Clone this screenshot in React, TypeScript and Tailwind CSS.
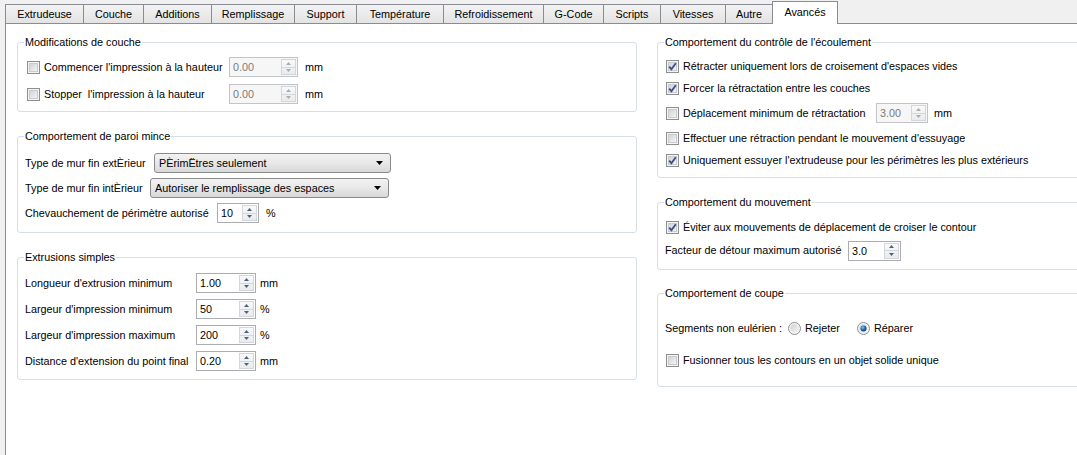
import React from 'react';

const tabs = [
    { label: 'Extrudeuse', w: 'w-[79px]' },
    { label: 'Couche', w: 'w-[61px]' },
    { label: 'Additions', w: 'w-[69px]' },
    { label: 'Remplissage', w: 'w-[84px]' },
    { label: 'Support', w: 'w-[63px]' },
    { label: 'Température', w: 'w-[88px]' },
    { label: 'Refroidissement', w: 'w-[101px]' },
    { label: 'G-Code', w: 'w-[61px]' },
    { label: 'Scripts', w: 'w-[58px]' },
    { label: 'Vitesses', w: 'w-[66px]' },
    { label: 'Autre', w: 'w-[48px]' },
];

function CheckBox({ checked }: { checked?: boolean }) {
    return (
        <svg width="13" height="13" viewBox="0 0 13 13" className="shrink-0">
            <defs>
                <linearGradient id="cbg" x1="0" y1="0" x2="1" y2="1">
                    <stop offset="0" stopColor="#cfd1d4" />
                    <stop offset="1" stopColor="#f6f6f6" />
                </linearGradient>
            </defs>
            <rect x="0.5" y="0.5" width="12" height="12" fill="#f4f4f4" stroke="#8e8f8f" />
            <rect x="2.5" y="2.5" width="8" height="8" fill="url(#cbg)" stroke="#c9cbce" strokeWidth="1" />
            {checked && (
                <path d="M3.2 6.6 L5.4 9.2 L9.8 3.2" fill="none" stroke="#3f4f8c" strokeWidth="1.9" />
            )}
        </svg>
    );
}

function Radio({ checked }: { checked?: boolean }) {
    return (
        <svg width="13" height="13" viewBox="0 0 13 13" className="shrink-0">
            <defs>
                <linearGradient id="rbg" x1="0" y1="0" x2="1" y2="1">
                    <stop offset="0" stopColor="#cdcfd2" />
                    <stop offset="1" stopColor="#f7f7f7" />
                </linearGradient>
                <radialGradient id="rdot" cx="0.4" cy="0.35" r="0.7">
                    <stop offset="0" stopColor="#8fd0f4" />
                    <stop offset="0.5" stopColor="#1f6fb0" />
                    <stop offset="1" stopColor="#0d3568" />
                </radialGradient>
            </defs>
            <circle cx="6.5" cy="6.5" r="6" fill="#f4f4f4" stroke="#8e8f8f" />
            <circle cx="6.5" cy="6.5" r="4.2" fill="url(#rbg)" />
            {checked && <circle cx="6.5" cy="6.5" r="3" fill="url(#rdot)" />}
        </svg>
    );
}

function Spin({ value, w, disabled }: { value: string; w: string; disabled?: boolean }) {
    const arrow = disabled ? '#a9acb0' : '#4d6185';
    return (
        <div
            className={`flex h-[20px] shrink-0 ${w} border ${
                disabled ? 'border-[#c2c4c7] bg-[#f6f6f6] text-[#7a7a7a]' : 'border-[#abadb3] bg-white text-black'
            }`}
        >
            <span className="flex-1 pl-[3px] pt-[2px] leading-[15px]">{value}</span>
            <div className="flex flex-col w-[15px] my-[1px] mr-[1px] border border-[#d3d6da] bg-gradient-to-b from-[#f9f9f9] to-[#e9ebed]">
                <div className="flex-1 flex items-center justify-center border-b border-[#d3d6da]">
                    <svg width="5" height="3" viewBox="0 0 5 3">
                        <path d="M0 3 L2.5 0 L5 3 Z" fill={arrow} />
                    </svg>
                </div>
                <div className="flex-1 flex items-center justify-center">
                    <svg width="5" height="3" viewBox="0 0 5 3">
                        <path d="M0 0 L2.5 3 L5 0 Z" fill={arrow} />
                    </svg>
                </div>
            </div>
        </div>
    );
}

function Select({ value, w }: { value: string; w: string }) {
    return (
        <div
            className={`flex items-center h-[20px] shrink-0 ${w} border border-[#8a8a8a] rounded-[3px] bg-gradient-to-b from-[#f2f2f2] via-[#e8e8e8] to-[#d8d8d8] pl-[4px] pr-[7px]`}
        >
            <span className="flex-1 whitespace-nowrap">{value}</span>
            <svg width="7" height="4" viewBox="0 0 7 4">
                <path d="M0 0 L7 0 L3.5 4 Z" fill="#000" />
            </svg>
        </div>
    );
}

function Group({ title, className, children }: { title: string; className?: string; children: React.ReactNode }) {
    return (
        <fieldset className={`border border-[#d5dfe5] rounded-[3px] px-[6px] min-w-0 ${className ?? ''}`}>
            <legend className="px-[1px] leading-[14px]">{title}</legend>
            {children}
        </fieldset>
    );
}

export default function App() {
    return (
        <div className="w-[1077px] h-[455px] overflow-hidden bg-[#f0f0f0] text-[10.8px] text-black font-['Liberation_Sans',Tahoma,Arial,sans-serif]">
            {/* Tabs */}
            <div className="flex items-end h-[23px] pl-[5px]">
                {tabs.map((t, i) => (
                    <div
                        key={t.label}
                        className={`${t.w} h-[19px] shrink-0 ${i === 0 ? '' : '-ml-px'} border border-b-0 border-[#898c95] bg-gradient-to-b from-[#f3f3f3] to-[#e3e3e3] flex justify-center pt-[3px] leading-[13px] whitespace-nowrap`}
                    >
                        {t.label}
                    </div>
                ))}
                <div className="relative z-10 w-[66px] h-[23px] -mb-px -ml-px shrink-0 border border-b-0 border-[#898c95] bg-white flex justify-center pt-[4px] leading-[13px]">
                    Avancés
                </div>
            </div>

            {/* Panel */}
            <div className="ml-[5px] h-[432px] border-l border-t border-[#898c95] bg-white flex gap-[20px] pl-[11px] pt-[11px] overflow-hidden">
                {/* Left column */}
                <div className="w-[620px] shrink-0 flex flex-col gap-[17px]">
                    <Group title="Modifications de couche">
                        <div className="flex flex-col gap-[7px] pt-[8px] pb-[7px]">
                            <div className="flex items-center h-[20px]">
                                <div className="w-[205px] flex items-center pl-[3px] gap-[4px] whitespace-nowrap">
                                    <CheckBox />
                                    <span>Commencer l'impression à la hauteur</span>
                                </div>
                                <Spin value="0.00" w="w-[69px]" disabled />
                                <span className="ml-[7px]">mm</span>
                            </div>
                            <div className="flex items-center h-[20px]">
                                <div className="w-[205px] flex items-center pl-[3px] gap-[4px] whitespace-pre">
                                    <CheckBox />
                                    <span>Stopper  l'impression à la hauteur</span>
                                </div>
                                <Spin value="0.00" w="w-[69px]" disabled />
                                <span className="ml-[7px]">mm</span>
                            </div>
                        </div>
                    </Group>

                    <Group title="Comportement de paroi mince">
                        <div className="flex flex-col gap-[5px] pt-[10px] pb-[9px] pl-[1px]">
                            <div className="flex items-center h-[20px] gap-[6px] whitespace-nowrap">
                                <span className="w-[123px]">Type de mur fin extÈrieur</span>
                                <Select value="PÈrimËtres seulement" w="w-[237px]" />
                            </div>
                            <div className="flex items-center h-[20px] gap-[6px] whitespace-nowrap">
                                <span className="w-[119px]">Type de mur fin intÈrieur</span>
                                <Select value="Autoriser le remplissage des espaces" w="w-[239px]" />
                            </div>
                            <div className="flex items-center h-[20px] gap-[6px] whitespace-nowrap">
                                <span className="w-[186px]">Chevauchement de périmètre autorisé</span>
                                <Spin value="10" w="w-[42px]" />
                                <span className="ml-[1px]">%</span>
                            </div>
                        </div>
                    </Group>

                    <Group title="Extrusions simples">
                        <div className="flex flex-col gap-[6px] pt-[9px] pb-[8px] pl-[1px]">
                            {[
                                ['Longueur d\'extrusion minimum', '1.00', 'mm'],
                                ['Largeur d\'impression minimum', '50', '%'],
                                ['Largeur d\'impression maximum', '200', '%'],
                                ['Distance d\'extension du point final', '0.20', 'mm'],
                            ].map(([label, value, unit]) => (
                                <div key={label} className="flex items-center h-[20px] whitespace-nowrap">
                                    <span className="w-[171px]">{label}</span>
                                    <Spin value={value} w="w-[60px]" />
                                    <span className="ml-[4px]">{unit}</span>
                                </div>
                            ))}
                        </div>
                    </Group>
                </div>

                {/* Right column */}
                <div className="w-[640px] shrink-0 flex flex-col gap-[17px]">
                    <Group title="Comportement du contrôle de l'écoulement">
                        <div className="flex flex-col gap-[6px] pt-[9px] pb-[9px] pl-[2px] whitespace-nowrap">
                            <div className="flex items-center h-[16px] gap-[4px]">
                                <CheckBox checked />
                                <span>Rétracter uniquement lors de croisement d'espaces vides</span>
                            </div>
                            <div className="flex items-center h-[16px] gap-[4px]">
                                <CheckBox checked />
                                <span>Forcer la rétractation entre les couches</span>
                            </div>
                            <div className="flex items-center h-[22px] py-[1px]">
                                <div className="w-[210px] flex items-center gap-[4px]">
                                    <CheckBox />
                                    <span>Déplacement minimum de rétractation</span>
                                </div>
                                <Spin value="3.00" w="w-[52px]" disabled />
                                <span className="ml-[6px]">mm</span>
                            </div>
                            <div className="flex items-center h-[16px] gap-[4px]">
                                <CheckBox />
                                <span>Effectuer une rétraction pendant le mouvement d'essuyage</span>
                            </div>
                            <div className="flex items-center h-[16px] gap-[4px]">
                                <CheckBox checked />
                                <span>Uniquement essuyer l'extrudeuse pour les périmètres les plus extérieurs</span>
                            </div>
                        </div>
                    </Group>

                    <Group title="Comportement du mouvement">
                        <div className="flex flex-col gap-[5px] pt-[10px] pb-[8px] whitespace-nowrap">
                            <div className="flex items-center h-[16px] gap-[4px] pl-[2px]">
                                <CheckBox checked />
                                <span>Éviter aux mouvements de déplacement de croiser le contour</span>
                            </div>
                            <div className="flex items-center h-[21px] gap-[6px] pl-[1px]">
                                <span className="w-[177px]">Facteur de détour maximum autorisé</span>
                                <Spin value="3.0" w="w-[53px]" />
                            </div>
                        </div>
                    </Group>

                    <Group title="Comportement de coupe" className="-mt-px">
                        <div className="flex flex-col gap-[16px] pt-[20px] pb-[18px] whitespace-nowrap">
                            <div className="flex items-center h-[16px]">
                                <span className="pl-[1px] w-[118px]">Segments non eulérien :</span>
                                <span className="ml-[6px]"><Radio /></span>
                                <span className="ml-[4px] w-[48px]">Rejeter</span>
                                <span className="ml-[4px]"><Radio checked /></span>
                                <span className="ml-[4px]">Réparer</span>
                            </div>
                            <div className="flex items-center h-[16px] gap-[4px] pl-[2px]">
                                <CheckBox />
                                <span>Fusionner tous les contours en un objet solide unique</span>
                            </div>
                        </div>
                    </Group>
                </div>
            </div>
        </div>
    );
}
